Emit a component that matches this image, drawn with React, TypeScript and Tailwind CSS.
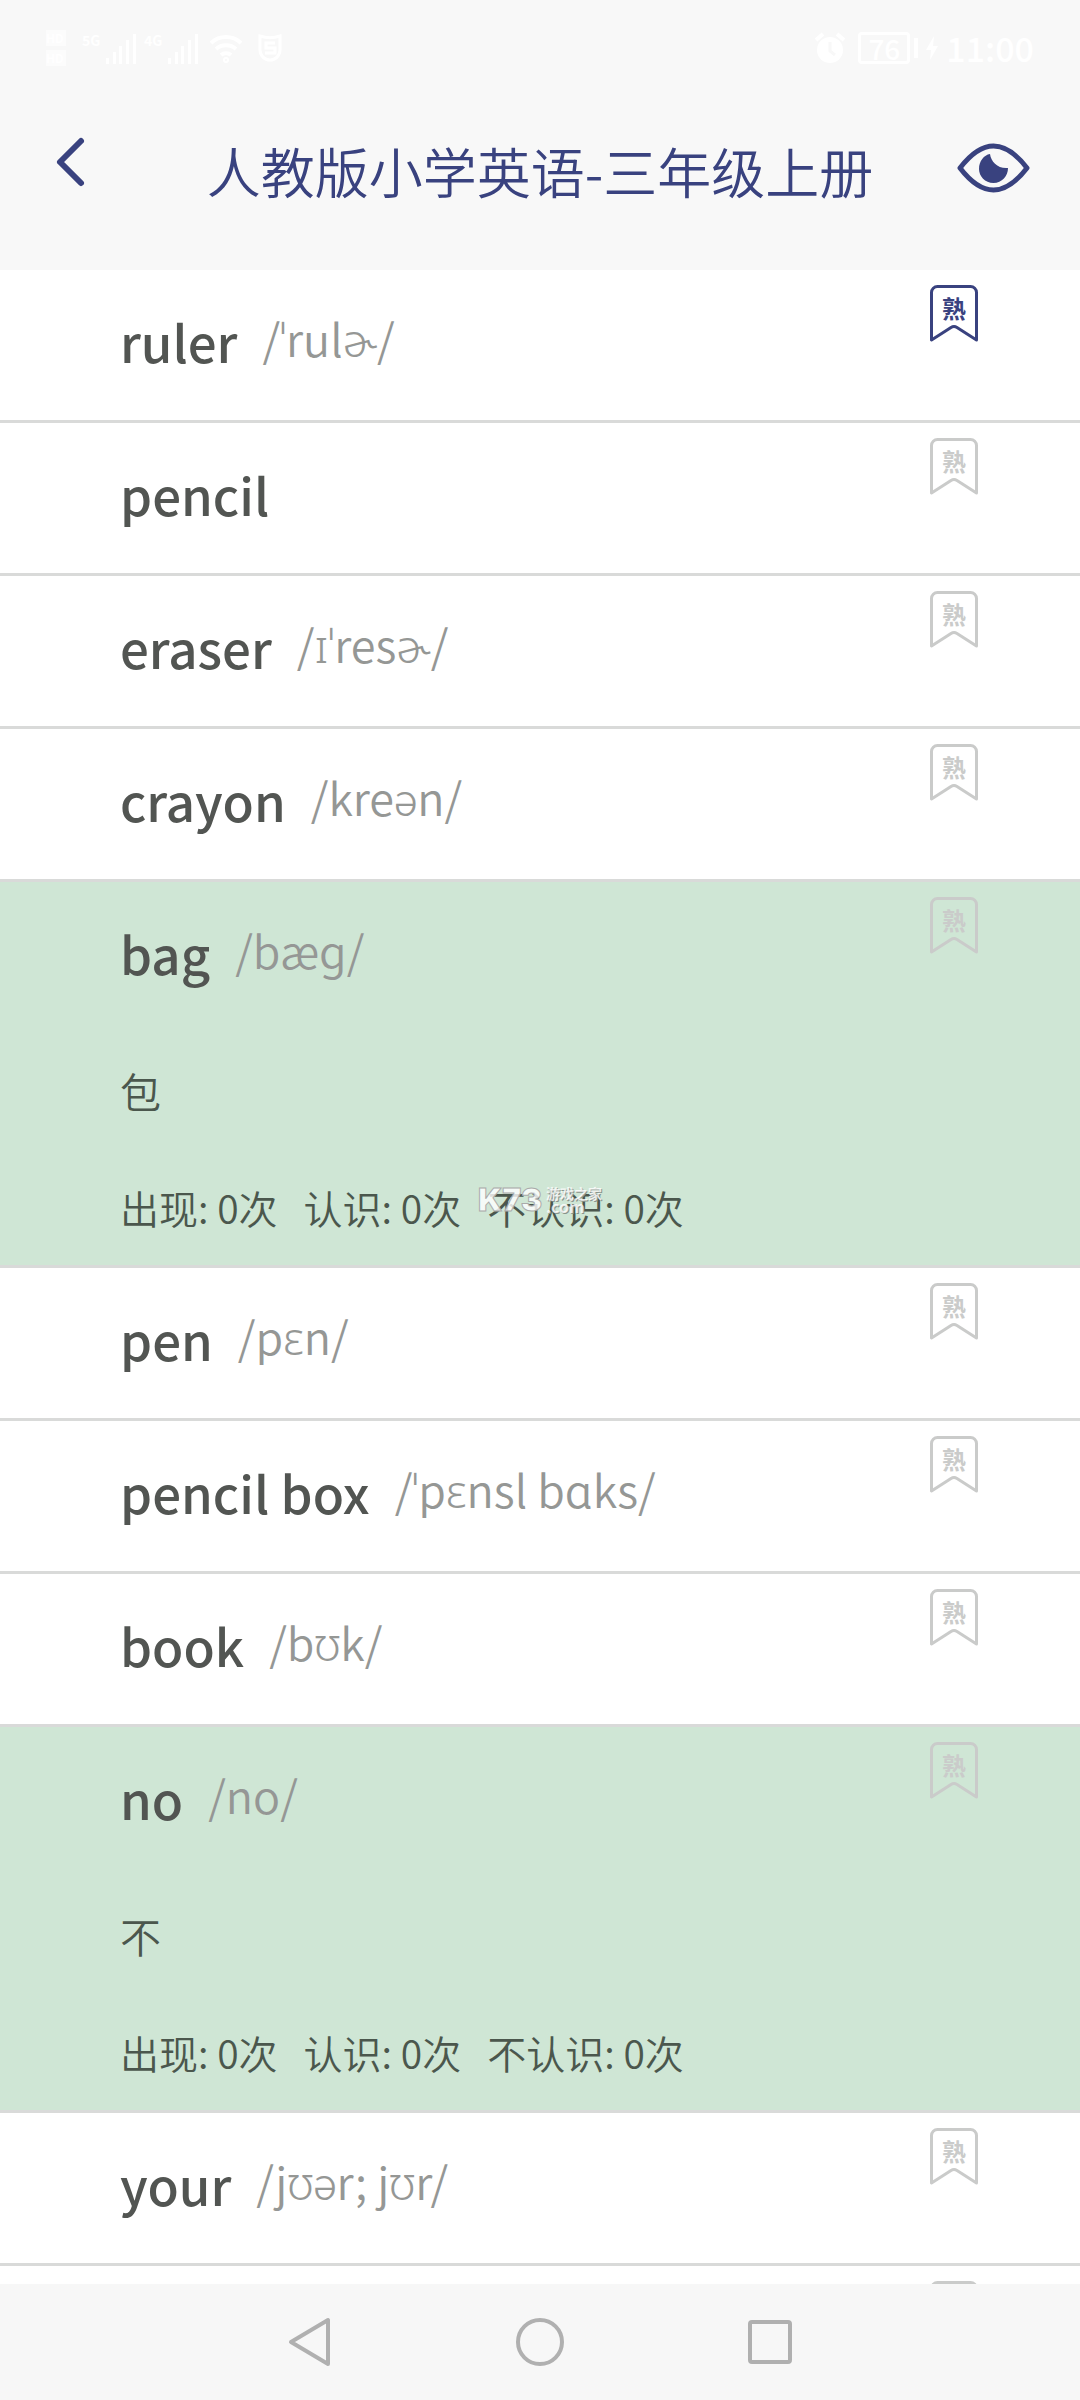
import React, { useState } from 'react';

interface Word {
  text: string;
  phonetic?: string;
  meaning: string;
}

const WORDS: Word[] = [
  { text: 'ruler', phonetic: '/ˈrulɚ/', meaning: '尺子' },
  { text: 'pencil', meaning: '铅笔' },
  { text: 'eraser', phonetic: '/ɪˈresɚ/', meaning: '橡皮' },
  { text: 'crayon', phonetic: '/kreən/', meaning: '蜡笔' },
  { text: 'bag', phonetic: '/bæɡ/', meaning: '包' },
  { text: 'pen', phonetic: '/pɛn/', meaning: '钢笔' },
  { text: 'pencil box', phonetic: '/ˈpɛnsl bɑks/', meaning: '铅笔盒' },
  { text: 'book', phonetic: '/bʊk/', meaning: '书' },
  { text: 'no', phonetic: '/no/', meaning: '不' },
  { text: 'your', phonetic: '/jʊər; jʊr/', meaning: '你的' },
  { text: 'red', phonetic: '/rɛd/', meaning: '红色' },
];

const SignalIcon = () => (
  <svg width="30" height="32" viewBox="0 0 30 32" fill="currentColor" aria-hidden="true">
    <rect x="0" y="26" width="3" height="6" />
    <rect x="7" y="20" width="3" height="12" />
    <rect x="13" y="14" width="3" height="18" />
    <rect x="20" y="8" width="3" height="24" />
    <rect x="27" y="2" width="3" height="30" />
  </svg>
);

const StatusBar = () => (
  <div className="flex h-24 items-center justify-between px-[46px] text-white">
    <div className="flex items-center">
      <div className="flex w-9 flex-col gap-1 text-xs leading-4 font-bold">
        <span className="w-5 bg-white/60">HD</span>
        <span className="w-5 bg-white/60">HD</span>
      </div>
      <span className="mb-4 w-6 text-sm leading-4 font-bold">5G</span>
      <SignalIcon />
      <span className="mb-4 ml-2 w-6 text-sm leading-4 font-bold">4G</span>
      <SignalIcon />
      <svg className="ml-3" width="32" height="30" viewBox="0 0 32 30" fill="none" stroke="currentColor" strokeWidth="4" aria-hidden="true">
        <path d="M1 10a22 22 0 0 1 30 0M6 16a15 15 0 0 1 20 0M11 22a8 8 0 0 1 10 0" />
        <circle cx="16" cy="27" r="1" />
      </svg>
      <svg className="ml-4" width="24" height="30" viewBox="0 0 24 30" fill="none" stroke="currentColor" strokeWidth="3" aria-hidden="true">
        <path d="M2 3c6 2 14 2 20 0v14a10 10 0 0 1-20 0zM17 10H8v5h9v5H7" />
      </svg>
    </div>
    <div className="flex items-center">
      <svg width="32" height="32" viewBox="0 0 32 32" aria-hidden="true">
        <circle cx="16" cy="18" r="13" fill="currentColor" />
        <path d="M2 8l7-6M30 8l-7-6" stroke="currentColor" strokeWidth="4" />
        <path d="M16 10v9l5 4" fill="none" stroke="#f8f8f8" strokeWidth="3" />
      </svg>
      <span className="ml-3 flex h-8 w-[52px] items-center justify-center rounded-sm border-3 border-white text-[28px] leading-none font-medium">
        76
      </span>
      <span className="ml-1 h-5 w-1 bg-white" />
      <svg className="ml-2" width="12" height="24" viewBox="0 0 12 24" fill="currentColor" aria-hidden="true">
        <path d="M8 0L0 14h5L4 24l8-14H7z" />
      </svg>
      <span className="ml-2 text-[34px] leading-10 font-medium">11:00</span>
    </div>
  </div>
);

const Header = () => (
  <header className="shrink-0 bg-[#f8f8f8]">
    <StatusBar />
    <div className="grid grid-cols-[1fr_auto_1fr] items-center px-[50px] pb-[30px] text-[#39427f]">
      <button type="button" aria-label="返回" className="justify-self-start">
        <svg width="42" height="72" viewBox="0 0 42 72" fill="none" stroke="currentColor" strokeWidth="6" strokeLinecap="round" strokeLinejoin="round">
          <path d="M31 9L10 30l21 21" />
        </svg>
      </button>
      <h1 className="pt-[6px] text-[54px] leading-[138px] font-[350]">人教版小学英语-三年级上册</h1>
      <button type="button" aria-label="显示释义" className="justify-self-end">
        <svg width="73" height="50" viewBox="0 0 73 50">
          <path
            d="M3 25C13 12 24 3 36.500 3S60 12 70 25C60 38 49 47 36.500 47S13 38 3 25z"
            fill="none"
            stroke="currentColor"
            strokeWidth="5"
            strokeLinejoin="round"
          />
          <path d="M33 11C34 19 41 26 51 25C51 33 45 40 36.500 40C28 40 22 33 22 26C22 18 27 12 33 11z" fill="currentColor" />
        </svg>
      </button>
    </div>
  </header>
);

interface BookmarkProps {
  active: boolean;
  onClick: () => void;
}

const Bookmark: React.FC<BookmarkProps> = ({ active, onClick }) => (
  <button
    type="button"
    aria-pressed={active}
    onClick={onClick}
    className={`relative mt-[15px] h-[57px] w-12 shrink-0 ${active ? 'text-[#39427f]' : 'text-[#cacbca]'}`}
  >
    <svg width="48" height="57" viewBox="0 0 48 57" fill="none" stroke="currentColor" strokeWidth="3" strokeLinejoin="round" aria-hidden="true">
      <path d="M7.500 1.500h33a6 6 0 0 1 6 6V55L27 42.500q-3-2-6 0L1.500 55V7.500a6 6 0 0 1 6-6z" />
    </svg>
    <span className="absolute inset-x-0 top-[9px] text-center text-2xl leading-7 font-bold">熟</span>
  </button>
);

interface WordRowProps {
  word: Word;
  known: boolean;
  expanded: boolean;
  onToggle: () => void;
  onMark: () => void;
}

const WordRow: React.FC<WordRowProps> = ({ word, known, expanded, onToggle, onMark }) => (
  <li className={`border-b-3 border-[#d9dad9] ${expanded ? 'bg-[#cfe6d5]' : 'bg-white'}`}>
    <div className="flex items-start justify-between pr-[102px] pl-[120px]">
      <button type="button" onClick={onToggle} className="flex h-[150px] grow items-start gap-[25px] pt-[30px] text-left">
        <span className="text-[51px] leading-[82px] font-medium text-[#525552]">{word.text}</span>
        {word.phonetic && (
          <span className="font-['Noto_Sans_CJK_SC',Roboto,'Noto_Sans',sans-serif] text-[45px] leading-[76px] font-[350] text-[#959795]">
            {word.phonetic}
          </span>
        )}
      </button>
      <Bookmark active={known} onClick={onMark} />
    </div>
    {expanded && (
      <div className="px-[120px] pb-[28px] font-[350] text-[#4b574d]">
        <p className="pt-[28px] text-[41px] leading-[60px]">{word.meaning}</p>
        <p className="flex gap-[26px] pt-[57px] text-[39px] leading-[60px]">
          <span>出现: 0次</span>
          <span>认识: 0次</span>
          <span>不认识: 0次</span>
        </p>
      </div>
    )}
  </li>
);

const Watermark = () => (
  <div className="pointer-events-none absolute inset-0 flex items-center justify-center gap-1 font-bold text-white/80">
    <span className="font-[Inter] text-[32px] leading-6 font-black [-webkit-text-stroke:1px_#aaa]">K73</span>
    <span className="flex flex-col [text-shadow:1px_1px_0_#8a948c]">
      <span className="text-sm leading-[13px]">游戏之家</span>
      <span className="text-base leading-[13px]">.com</span>
    </span>
  </div>
);

const NavBar = () => (
  <nav className="flex h-[116px] shrink-0 justify-center bg-[#f7f7f7] text-[#b0b0b0]">
    <button type="button" aria-label="后退" className="flex w-[230px] items-center justify-center">
      <svg width="44" height="50" viewBox="0 0 44 50" fill="none" stroke="currentColor" strokeWidth="4" strokeLinejoin="round">
        <path d="M40 3v44L3 25z" />
      </svg>
    </button>
    <button type="button" aria-label="主页" className="flex w-[230px] items-center justify-center">
      <span className="size-12 rounded-full border-4 border-current" />
    </button>
    <button type="button" aria-label="最近任务" className="flex w-[230px] items-center justify-center">
      <span className="size-11 rounded-sm border-4 border-current" />
    </button>
  </nav>
);

export default function App() {
  const [known, setKnown] = useState<string[]>(['ruler']);
  const [expanded, setExpanded] = useState<string[]>(['bag', 'no']);

  const toggle = (list: string[], text: string) =>
    list.includes(text) ? list.filter((item) => item !== text) : [...list, text];

  return (
    <div className="relative flex h-screen flex-col bg-white font-['Noto_Sans_CJK_SC','Noto_Sans',sans-serif]">
      <Header />
      <main className="min-h-0 flex-1 overflow-hidden">
        <ul>
          {WORDS.map((word) => (
            <WordRow
              key={word.text}
              word={word}
              known={known.includes(word.text)}
              expanded={expanded.includes(word.text)}
              onToggle={() => setExpanded(toggle(expanded, word.text))}
              onMark={() => setKnown(toggle(known, word.text))}
            />
          ))}
        </ul>
      </main>
      <NavBar />
      <Watermark />
    </div>
  );
}
